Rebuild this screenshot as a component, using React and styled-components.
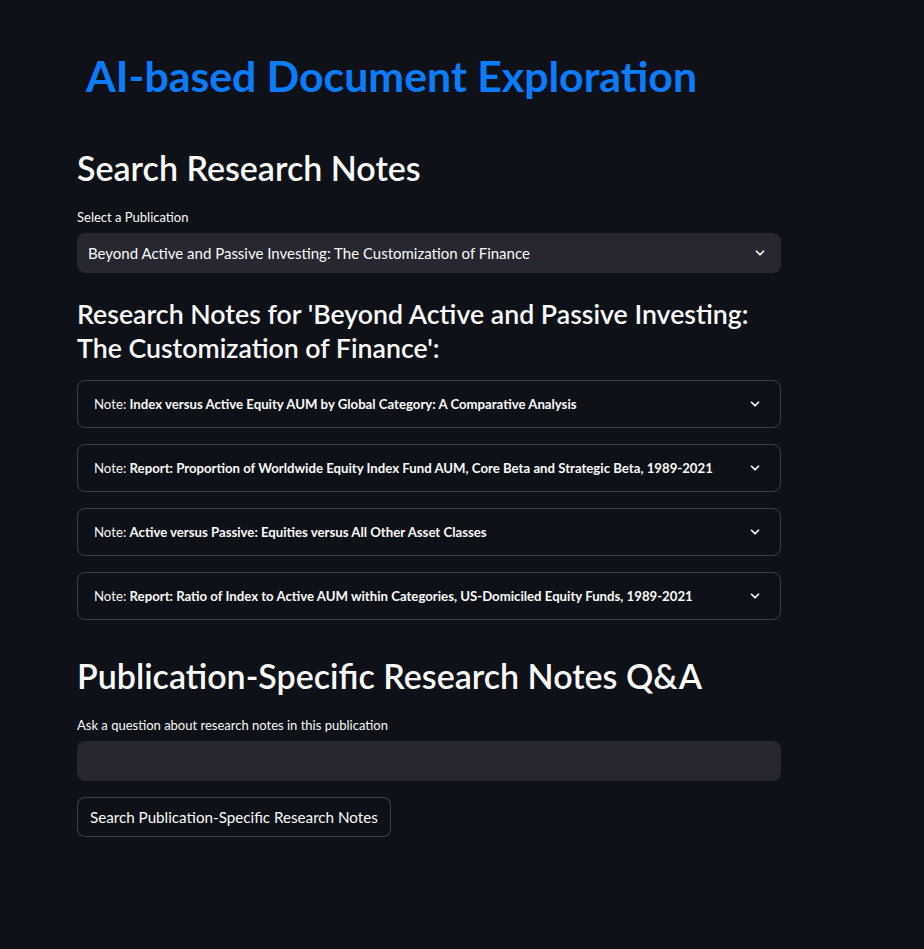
import React from 'react';
import styled, { createGlobalStyle } from 'styled-components';

const GlobalStyle = createGlobalStyle`
  html, body {
    margin: 0;
    padding: 0;
    background: #0e1117;
  }
  body {
    font-family: Lato, "Noto Sans", sans-serif;
    color: #fafafa;
  }
`;

const publication = 'Beyond Active and Passive Investing: The Customization of Finance';

const notes = [
  'Index versus Active Equity AUM by Global Category: A Comparative Analysis',
  'Report: Proportion of Worldwide Equity Index Fund AUM, Core Beta and Strategic Beta, 1989-2021',
  'Active versus Passive: Equities versus All Other Asset Classes',
  'Report: Ratio of Index to Active AUM within Categories, US-Domiciled Equity Funds, 1989-2021',
];

const Chevron = () => (
  <svg width="14" height="14" viewBox="0 0 24 24" fill="none">
    <path d="M6 9l6 6 6-6" stroke="#fafafa" strokeWidth="3" strokeLinecap="round" strokeLinejoin="round" />
  </svg>
);

const App = () => {
  return (
    <Page>
      <GlobalStyle />
      <Main>
        <Title>AI-based Document Exploration</Title>

        <Heading>Search Research Notes</Heading>
        <Label>Select a Publication</Label>
        <SelectBox>
          <span>{publication}</span>
          <Chevron />
        </SelectBox>

        <SubHeading>Research Notes for '{publication}':</SubHeading>

        <NoteList>
          {notes.map((note) => (
            <Expander key={note}>
              <span>
                Note: <b>{note}</b>
              </span>
              <Chevron />
            </Expander>
          ))}
        </NoteList>

        <Heading $top={34}>Publication-Specific Research Notes Q&amp;A</Heading>
        <Label>Ask a question about research notes in this publication</Label>
        <TextInput />
        <Button>Search Publication-Specific Research Notes</Button>
      </Main>
    </Page>
  );
};

const Page = styled.div`
  min-height: 949px;
  background: #0e1117;
`;

const Main = styled.div`
  width: 704px;
  padding: 50px 0 0 77px;
  display: flex;
  flex-direction: column;
`;

const Title = styled.h1`
  margin: 0;
  padding-left: 9px;
  font-size: 42.8px;
  font-weight: 700;
  line-height: 52px;
  color: #0b7dfc;
`;

const Heading = styled.h2`
  margin: ${(p) => p.$top || 44}px 0 0;
  font-size: 34px;
  font-weight: 600;
  line-height: 44px;
  color: #fafafa;
`;

const Label = styled.div`
  margin-top: 19px;
  font-size: 13px;
  line-height: 16px;
  color: #fafafa;
`;

const SelectBox = styled.div`
  margin-top: 8px;
  height: 40px;
  box-sizing: border-box;
  padding: 0 14px 0 11px;
  display: flex;
  align-items: center;
  justify-content: space-between;
  background: #262730;
  border-radius: 8px;
  font-size: 15px;
`;

const SubHeading = styled.h3`
  margin: 24px 0 0;
  font-size: 26.7px;
  font-weight: 600;
  line-height: 34px;
  color: #fafafa;
`;

const NoteList = styled.div`
  margin-top: 15px;
  display: flex;
  flex-direction: column;
  gap: 16px;
`;

const Expander = styled.div`
  height: 48px;
  box-sizing: border-box;
  padding: 0 18px 0 16px;
  display: flex;
  align-items: center;
  justify-content: space-between;
  border: 1px solid rgba(250, 250, 250, 0.2);
  border-radius: 8px;
  font-size: 13.2px;

  b {
    font-weight: 700;
  }
`;

const TextInput = styled.div`
  margin-top: 8px;
  height: 40px;
  background: #262730;
  border-radius: 8px;
`;

const Button = styled.button`
  margin-top: 16px;
  align-self: flex-start;
  height: 40px;
  padding: 0 12px;
  background: #0e1117;
  border: 1px solid rgba(250, 250, 250, 0.2);
  border-radius: 8px;
  color: #fafafa;
  font-family: Lato, "Noto Sans", sans-serif;
  font-size: 15.2px;
`;

export default App;
